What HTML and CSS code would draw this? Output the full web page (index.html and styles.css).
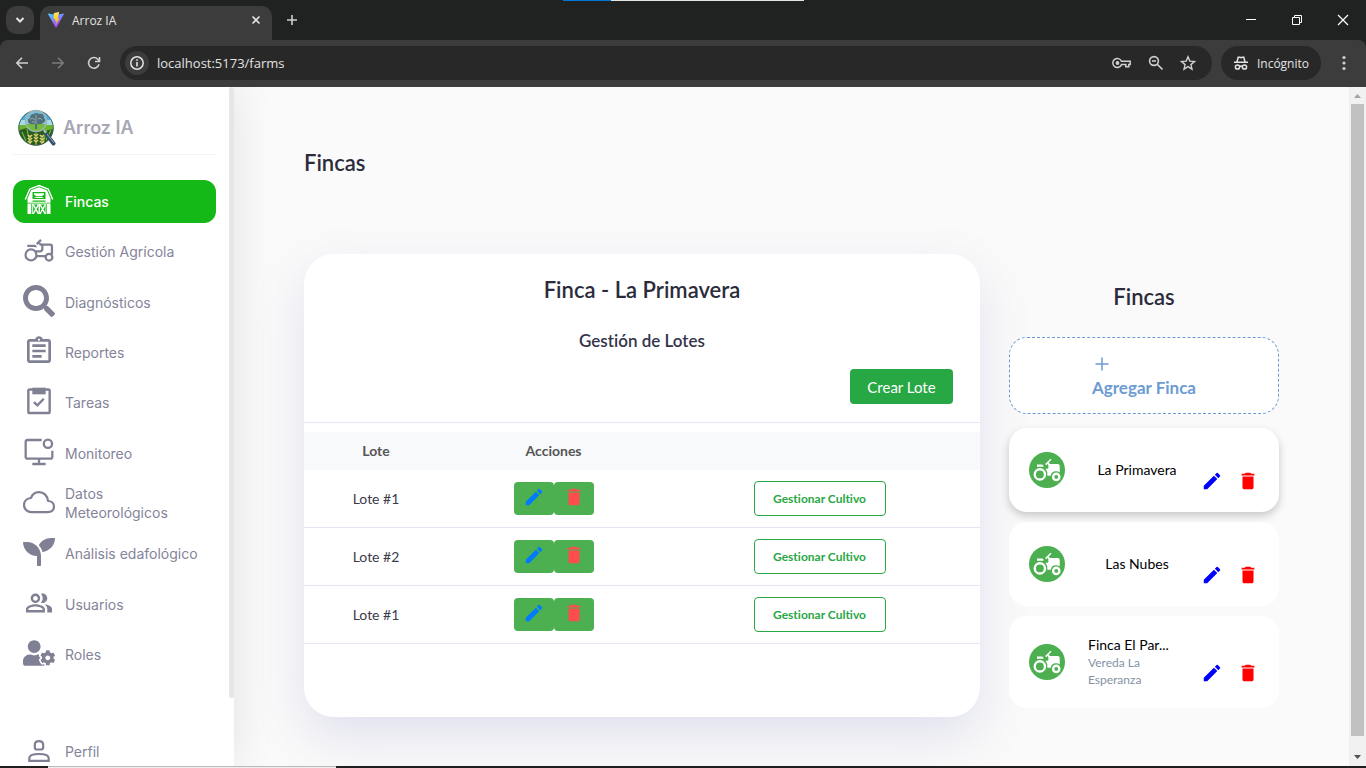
FILE: index.html
```html
<!DOCTYPE html>
<html lang="es">
<head>
<meta charset="utf-8">
<title>Arroz IA</title>
<link rel="stylesheet" href="styles.css">
</head>
<body>
<svg class="defs" aria-hidden="true">
  <symbol id="edit" viewBox="0 0 24 24"><path d="M3 17.250V21h3.750L17.810 9.940l-3.750-3.750L3 17.250zM20.710 7.040a.996.996 0 0 0 0-1.410l-2.340-2.340a.996.996 0 0 0-1.410 0l-1.830 1.830 3.750 3.750 1.830-1.830z"/></symbol>
  <symbol id="trash" viewBox="0 0 24 24"><path d="M6 19c0 1.100.9 2 2 2h8c1.100 0 2-.9 2-2V7H6v12zM19 4h-3.500l-1-1h-5l-1 1H5v2h14V4z"/></symbol>
  <symbol id="tractor" viewBox="0 0 24 24"><g fill="none" stroke="currentColor" stroke-width="1.700"><circle cx="6" cy="15.700" r="4.100"/><circle cx="19.500" cy="17.400" r="2.500"/><path d="M3.200 8.900H8.500q1 0 1 1M10.300 7.600l3.200-3.200M11.600 6.200l1.600 1.600M12.500 7.900h8q1.200 0 1.200 1.200v6.200M14.500 7.900v3.200q0 2-2 2H9.600M10.300 16.600h6.600"/></g></symbol>
  <symbol id="tractor-solid" viewBox="0 0 24 24"><path fill="currentColor" d="M4 7.500h4q1.300 0 1.300 1.800H4zM19.500 13q1.500 0 2.700.9V8.700q0-1.600-1.600-1.600h-6.300l-.9-1.100 2.200-2.200-.8-.8-4.300 4.200.9.900 1-1 .7.900V10q0 1-1 1h-1.300q1.900 2.300 1.500 5.500h2.700q.6-3.500 4.200-3.500z"/><g fill="none" stroke="currentColor" stroke-width="1.900"><circle cx="6.300" cy="15.500" r="4.100"/><circle cx="19.400" cy="17.500" r="2.500"/></g></symbol>
</svg>

<header class="browser">
  <div class="tabstrip">
    <button class="tab-search" aria-label="Buscar pestañas"><svg width="12" height="12" viewBox="0 0 12 12"><path d="M2.500 4l3.500 3.500L9.500 4" fill="none" stroke="#e3e3e3" stroke-width="2"/></svg></button>
    <div class="tab">
      <svg width="16" height="16" viewBox="0 0 32 32">
        <defs><linearGradient id="v1" x1="0" y1="0" x2=".6" y2="1"><stop stop-color="#41d1ff"/><stop offset="1" stop-color="#bd34fe"/></linearGradient><linearGradient id="v2" x1="0" y1="0" x2="0" y2="1"><stop stop-color="#ffea83"/><stop offset=".3" stop-color="#ffdd35"/><stop offset="1" stop-color="#ffa800"/></linearGradient></defs>
        <path fill="url(#v1)" d="M31.800 4.500L17 31q-.8 1.200-1.600 0L.2 4.500Q-.3 3 1.300 3.200L16 5.800l14.700-2.600q1.600-.1 1.100 1.300z"/>
        <path fill="url(#v2)" d="M22.500 0L11.800 2.100l-.7 12 3.800-.8-1 5 2.800-.8-1.800 8.500L23 12.500l-3.800.6z"/>
      </svg>
      <span class="tab-title">Arroz IA</span>
      <button class="icon-btn" aria-label="Cerrar pestaña"><svg width="10" height="10" viewBox="0 0 10 10"><path d="M1.500 1.500l7 7M8.500 1.500l-7 7" stroke="#e3e3e3" stroke-width="1.600"/></svg></button>
    </div>
    <button class="icon-btn new-tab" aria-label="Nueva pestaña"><svg width="12" height="12" viewBox="0 0 12 12"><path d="M6 1v10M1 6h10" stroke="#d0d0d0" stroke-width="1.600"/></svg></button>
    <div class="window-controls">
      <button class="icon-btn" aria-label="Minimizar"><svg width="12" height="12" viewBox="0 0 12 12"><path d="M1 5.500h10" stroke="#fff"/></svg></button>
      <button class="icon-btn" aria-label="Restaurar"><svg width="12" height="12" viewBox="0 0 12 12"><path d="M1.500 3.500h7v7h-7zM3.500 3.500v-2h7v7h-2" fill="none" stroke="#fff"/></svg></button>
      <button class="icon-btn" aria-label="Cerrar"><svg width="12" height="12" viewBox="0 0 12 12"><path d="M1 1l10 10M11 1L1 11" stroke="#fff" stroke-width="1.200"/></svg></button>
    </div>
  </div>
  <div class="toolbar">
    <button class="icon-btn" aria-label="Atrás"><svg width="16" height="16" viewBox="0 0 16 16"><path d="M14 8H3M8 2.800L2.800 8 8 13.200" fill="none" stroke="#d0d0d0" stroke-width="1.600"/></svg></button>
    <button class="icon-btn" aria-label="Adelante"><svg width="16" height="16" viewBox="0 0 16 16"><path d="M2 8h11M8 2.800L13.200 8 8 13.200" fill="none" stroke="#7b7b7b" stroke-width="1.600"/></svg></button>
    <button class="icon-btn" aria-label="Recargar"><svg width="16" height="16" viewBox="0 0 16 16"><path d="M13 9.200A5.300 5.300 0 1 1 11.800 4.300L13.500 6M13.500 2v4.500H9" fill="none" stroke="#d0d0d0" stroke-width="1.600"/></svg></button>
    <div class="omnibox">
      <button class="site-info" aria-label="Información del sitio"><svg width="16" height="16" viewBox="0 0 16 16"><circle cx="8" cy="8" r="6.200" fill="none" stroke="#e3e3e3" stroke-width="1.500"/><path d="M8 7v4.500M8 4.200v1.600" stroke="#e3e3e3" stroke-width="1.600"/></svg></button>
      <input class="url" type="text" value="localhost:5173/farms" aria-label="Dirección">
      <button class="icon-btn" aria-label="Contraseñas"><svg width="20" height="16" viewBox="0 0 20 16"><g fill="none" stroke="#d0d0d0" stroke-width="1.500"><path d="M9.500 6.300H18.200v3.200h-1.400v2.200h-3V9.600H9.500A4.500 4.500 0 1 1 9.500 6.300z"/></g><circle cx="5.500" cy="8" r="1.900" fill="#d0d0d0"/></svg></button>
      <button class="icon-btn" aria-label="Zoom"><svg width="16" height="16" viewBox="0 0 16 16"><path d="M9.500 9.500l5 5M4 6h4" stroke="#d0d0d0" stroke-width="1.700"/><circle cx="6" cy="6" r="4.400" fill="none" stroke="#d0d0d0" stroke-width="1.600"/></svg></button>
      <button class="icon-btn" aria-label="Favoritos"><svg width="16" height="16" viewBox="0 0 16 16"><path d="M8 1.800l1.800 4.300 4.700.4-3.600 3.100 1.100 4.600L8 11.700l-4 2.500 1.100-4.600L1.500 6.500l4.700-.4z" fill="none" stroke="#d0d0d0" stroke-width="1.400"/></svg></button>
    </div>
    <button class="incognito"><svg width="16" height="16" viewBox="0 0 16 16"><path d="M1 7.300h14M4 7l1.200-4.800h1.600l1.200.5 1.200-.5h1.600L12 7M6.600 11.500q1.400-.9 2.800 0" fill="none" stroke="#e3e3e3" stroke-width="1.500"/><circle cx="4.500" cy="12" r="2.100" fill="none" stroke="#e3e3e3" stroke-width="1.500"/><circle cx="11.500" cy="12" r="2.100" fill="none" stroke="#e3e3e3" stroke-width="1.500"/></svg>Incógnito</button>
    <button class="icon-btn menu" aria-label="Menú"><svg width="4" height="16" viewBox="0 0 4 16"><g fill="#d0d0d0"><circle cx="2" cy="2.500" r="1.600"/><circle cx="2" cy="8" r="1.600"/><circle cx="2" cy="13.500" r="1.600"/></g></svg></button>
  </div>
</header>

<div class="page">
  <aside class="sidebar">
    <div class="sidebar-body">
      <div class="brand">
        <svg width="38" height="38" viewBox="0 0 38 38">
          <defs><clipPath id="disc"><circle cx="18" cy="19" r="17.300"/></clipPath></defs>
          <g clip-path="url(#disc)">
            <path fill="#45aee0" d="M0 0h38v18H0z"/><path fill="#a4dbe6" d="M0 11h38v6H0z"/>
            <path fill="#6cb52c" d="M0 16h38v22H0z"/><path fill="#285c20" d="M0 22q9-5 18-2t20-1v19H0z"/>
            <path d="M4 23l4 9M9 20l3 15M29 20l-4 14M33 21l-5 10M2 28l6 7" stroke="#73b83b" stroke-width="1.200"/>
            <path d="M12 26v10M18 24v13M24 26v10" stroke="#d9c468" stroke-width="1"/>
            <path d="M9.800 26l2.200 2 2.200-2M9.800 29l2.200 2 2.200-2M9.800 32l2.200 2 2.200-2M15.800 25l2.200 2 2.200-2M15.800 28l2.200 2 2.200-2M15.800 31l2.200 2 2.200-2M21.800 26l2.200 2 2.200-2M21.800 29l2.200 2 2.200-2M21.800 32l2.200 2 2.200-2" stroke="#e2cf70" stroke-width="1.200" fill="none"/>
          </g>
          <circle cx="18" cy="19" r="17.300" fill="none" stroke="#3f655f"/>
          <circle cx="18" cy="12" r="10.500" fill="#8ac4d6" fill-opacity=".75" stroke="#9db6bc" stroke-width="1.500"/>
          <path fill="#75bb3c" d="M8.500 15h19q-3 7-9.500 7t-9.500-7z"/>
          <path fill="#526f7c" d="M17 20v-5q-6 1-7-2-1-3 2-4 0-4 4-4 2-2 5 0 5-1 5 4 3 3-1 5-2 2-6 1v5z"/>
          <path d="M12 10q3-2 5 1M18 6v9M20 10q3-2 4 1M14 13h3" stroke="#a4b8bc" fill="none" stroke-width=".8"/>
          <path d="M26 21l3 5" stroke="#b7c8cd" stroke-width="2"/><path d="M28.500 25.500l7 9" stroke="#31506b" stroke-width="4" stroke-linecap="round"/><path d="M29 25l7 9" stroke="#91abc0"/>
        </svg>
        <span>Arroz IA</span>
      </div>
      <nav class="nav">
        <a class="nav-item active" href="#"><svg class="nav-icon" viewBox="0 0 32 32"><path d="M2.300 15.500L6.800 5 16 1.600 25.200 5l4.500 10.500" fill="none" stroke="#fff" stroke-width="1.400"/><path fill="#fff" fill-rule="evenodd" d="M4.500 14.500L8 6.300l8-3 8 3 3.500 8.200V30h-23zM9.500 8v7h13V8zM9.500 16.500v1.200h13v-1.200zM8.300 20v10h.9V20zM22.800 20v10h.9V20zM4.500 18.800v.8h23v-.8z"/><path fill="#fff" d="M11 9.200h10v1.600l-2 1.200h-6l-2-1.200zM11 14l2.500-1.300h5L21 14z"/><path fill="#14b817" d="M10.200 20.500h5.300V30h-5.300zM17 20.500h5.300V30H17z"/><path d="M10.200 20.500l5.300 9.500M15.500 20.500l-5.300 9.500M17 20.500l5.300 9.500M22.300 20.500L17 30" stroke="#fff" stroke-width="1.500"/></svg><span>Fincas</span></a>
        <a class="nav-item" href="#"><svg class="nav-icon"><use href="#tractor"/></svg><span>Gestión Agrícola</span></a>
        <a class="nav-item" href="#"><svg class="nav-icon" viewBox="0 0 512 512"><path d="M505 442.700L405.300 343c-4.500-4.500-10.600-7-17-7H372c27.600-35.300 44-79.700 44-128C416 93.100 322.900 0 208 0S0 93.100 0 208s93.100 208 208 208c48.300 0 92.700-16.400 128-44v16.300c0 6.400 2.500 12.500 7 17l99.700 99.700c9.400 9.400 24.600 9.400 33.900 0l28.300-28.300c9.400-9.400 9.400-24.600.1-34zM208 336c-70.700 0-128-57.200-128-128 0-70.700 57.200-128 128-128 70.700 0 128 57.200 128 128 0 70.700-57.200 128-128 128z"/></svg><span>Diagnósticos</span></a>
        <a class="nav-item" href="#"><svg class="nav-icon" viewBox="0 0 24 24"><path d="M7 15h7v2H7zm0-4h10v2H7zm0-4h10v2H7zm12-4h-4.180C14.400 1.840 13.300 1 12 1c-1.300 0-2.400.84-2.820 2H5c-1.100 0-2 .9-2 2v14c0 1.100.9 2 2 2h14c1.100 0 2-.9 2-2V5c0-1.100-.9-2-2-2zm-7-.25c.41 0 .75.34.75.75s-.34.75-.75.75-.75-.34-.75-.75.34-.75.75-.75zM19 19H5V5h14v14z"/></svg><span>Reportes</span></a>
        <a class="nav-item" href="#"><svg class="nav-icon" viewBox="0 0 24 24"><g fill="none" stroke="currentColor" stroke-width="1.800"><rect x="4" y="3.400" width="16" height="17.600" rx="1"/><path d="M8.200 12.800l2.600 2.500 4.800-5"/></g><path d="M7 2h10v5H7z"/></svg><span>Tareas</span></a>
        <a class="nav-item" href="#"><svg class="nav-icon" viewBox="0 0 24 24"><g fill="none" stroke="currentColor" stroke-width="1.700"><path d="M14 3H3.500Q2 3 2 4.500v11Q2 17 3.500 17h17q1.500 0 1.500-1.500V11M12 17v4M7 21h10"/><circle cx="18.700" cy="5.800" r="3.100"/></g></svg><span>Monitoreo</span></a>
        <a class="nav-item" href="#"><svg class="nav-icon" viewBox="0 0 512 512"><path fill="none" stroke="currentColor" stroke-width="36" stroke-linejoin="round" d="M400 240c-8.890-89.540-71-144-144-144-69 0-113.440 48.200-128 96-60 6-112 43.590-112 112 0 66 54 112 120 112h260c55 0 100-27.440 100-88 0-59.820-53-85.760-96-88z"/></svg><span>Datos Meteorológicos</span></a>
        <a class="nav-item" href="#"><svg class="nav-icon" viewBox="0 0 512 512"><path d="M64 96H0c0 123.700 100.300 224 224 224v144c0 8.800 7.200 16 16 16h32c8.800 0 16-7.200 16-16V320C288 196.300 187.700 96 64 96zm384-64c-84.200 0-157.400 46.500-195.700 115.200 27.700 30.200 48.200 66.900 59 107.600C424 243.100 512 147.900 512 32h-64z"/></svg><span>Análisis edafológico</span></a>
        <a class="nav-item" href="#"><svg class="nav-icon" viewBox="-1.500 -1.500 27 27"><path d="M16.670 13.130C18.040 14.060 19 15.320 19 17v3h4v-3c0-2.180-3.570-3.470-6.330-3.870zM15 12c2.210 0 4-1.790 4-4s-1.790-4-4-4c-.47 0-.91.1-1.330.24a5.980 5.980 0 0 1 0 7.520c.42.14.86.24 1.330.24zM9 12c2.210 0 4-1.790 4-4s-1.790-4-4-4-4 1.790-4 4 1.790 4 4 4zm0-6c1.100 0 2 .9 2 2s-.9 2-2 2-2-.9-2-2 .9-2 2-2zM9 13c-2.670 0-8 1.340-8 4v3h16v-3c0-2.660-5.330-4-8-4zm6 5H3v-.99C3.200 16.290 6.300 15 9 15s5.800 1.290 6 2v1z"/></svg><span>Usuarios</span></a>
        <a class="nav-item" href="#"><svg class="nav-icon" viewBox="0 0 640 512"><path d="M610.500 373.300c2.600-14.100 2.600-28.500 0-42.600l25.800-14.900c3-1.700 4.300-5.200 3.300-8.500-6.700-21.600-18.200-41.200-33.200-57.400-2.300-2.500-6-3.100-9-1.400l-25.800 14.900c-10.900-9.300-23.400-16.500-36.900-21.300v-29.800c0-3.400-2.400-6.400-5.700-7.100-22.300-5-45-4.800-66.200 0-3.300.7-5.700 3.700-5.700 7.100v29.800c-13.500 4.800-26 12-36.900 21.300l-25.800-14.900c-2.900-1.700-6.700-1.100-9 1.400-15 16.200-26.500 35.800-33.200 57.400-1 3.300.4 6.800 3.300 8.500l25.800 14.900c-2.600 14.100-2.600 28.500 0 42.600l-25.800 14.900c-3 1.700-4.300 5.200-3.300 8.500 6.700 21.600 18.200 41.100 33.200 57.400 2.300 2.500 6 3.100 9 1.400l25.800-14.900c10.900 9.300 23.400 16.500 36.900 21.300v29.800c0 3.400 2.400 6.400 5.700 7.100 22.300 5 45 4.800 66.200 0 3.300-.7 5.700-3.700 5.700-7.100v-29.800c13.500-4.800 26-12 36.900-21.300l25.800 14.900c2.900 1.700 6.700 1.100 9-1.400 15-16.200 26.500-35.800 33.200-57.400 1-3.300-.4-6.800-3.300-8.500l-25.800-14.900zM496 400.500c-26.800 0-48.500-21.800-48.500-48.500s21.800-48.500 48.500-48.500 48.500 21.800 48.500 48.500-21.700 48.500-48.500 48.500zM224 256c70.700 0 128-57.300 128-128S294.700 0 224 0 96 57.300 96 128s57.300 128 128 128zm201.200 226.500c-2.300-1.200-4.600-2.600-6.800-3.900l-7.900 4.600c-6 3.400-12.800 5.300-19.600 5.300-10.900 0-21.400-4.600-28.900-12.600-18.300-19.800-32.300-43.900-40.200-69.600-5.500-17.700 1.900-36.400 17.900-45.700l7.900-4.600c-.1-2.600-.1-5.200 0-7.800l-7.900-4.600c-16-9.200-23.400-28-17.900-45.700.9-2.900 2.200-5.800 3.200-8.700-3.800-.3-7.500-1.200-11.400-1.200h-16.700c-22.200 10.200-46.900 16-72.900 16s-50.600-5.800-72.900-16h-16.700C60.200 288 0 348.200 0 422.400V464c0 26.500 21.500 48 48 48h352c10.100 0 19.500-3.200 27.200-8.500-1.200-3.800-2-7.700-2-11.800v-9.200z"/></svg><span>Roles</span></a>
      </nav>
      <a class="nav-item profile" href="#"><svg class="nav-icon" viewBox="0 0 32 32"><g fill="none" stroke="currentColor" stroke-width="2.200"><path d="M11.800 11q0-3.800 4.200-3.800t4.200 3.800v2.200q0 2.300-2.300 2.300h-3.800q-2.300 0-2.300-2.300zM6.300 26.800v-2.600q0-4.200 9.700-4.200t9.700 4.200v2.600z"/></g></svg><span>Perfil</span></a>
    </div>
    <div class="sidebar-scroll"></div>
  </aside>

  <main class="main">
    <h1 class="title">Fincas</h1>
    <div class="content">
      <section class="card">
        <div class="card-head">
          <h2 class="title">Finca - La Primavera</h2>
          <h3 class="subtitle">Gestión de Lotes</h3>
          <button class="create">Crear Lote</button>
        </div>
        <table class="lots">
          <thead><tr><th class="col-lot">Lote</th><th class="col-actions">Acciones</th><th></th></tr></thead>
          <tbody>
            <tr><td>Lote #1</td><td><div class="row-actions"><button class="act edit" aria-label="Editar"><svg class="ico"><use href="#edit"/></svg></button><button class="act del" aria-label="Eliminar"><svg class="ico"><use href="#trash"/></svg></button></div></td><td><button class="manage">Gestionar Cultivo</button></td></tr>
            <tr><td>Lote #2</td><td><div class="row-actions"><button class="act edit" aria-label="Editar"><svg class="ico"><use href="#edit"/></svg></button><button class="act del" aria-label="Eliminar"><svg class="ico"><use href="#trash"/></svg></button></div></td><td><button class="manage">Gestionar Cultivo</button></td></tr>
            <tr><td>Lote #1</td><td><div class="row-actions"><button class="act edit" aria-label="Editar"><svg class="ico"><use href="#edit"/></svg></button><button class="act del" aria-label="Eliminar"><svg class="ico"><use href="#trash"/></svg></button></div></td><td><button class="manage">Gestionar Cultivo</button></td></tr>
          </tbody>
        </table>
      </section>

      <section class="farms">
        <h2 class="title">Fincas</h2>
        <button class="add"><span class="add-label"><svg width="20" height="20" viewBox="0 0 20 20"><path d="M10 3.500v13M3.500 10h13" stroke="currentColor" stroke-width="1.500"/></svg>Agregar Finca</span></button>
        <div class="farm-list">
          <article class="farm selected"><span class="avatar"><svg width="30" height="30"><use href="#tractor-solid"/></svg></span><div class="farm-text"><div class="farm-name">La Primavera</div></div><div class="farm-actions"><button class="icon-btn fe" aria-label="Editar"><svg class="ico"><use href="#edit"/></svg></button><button class="icon-btn fd" aria-label="Eliminar"><svg class="ico"><use href="#trash"/></svg></button></div></article>
          <article class="farm"><span class="avatar"><svg width="30" height="30"><use href="#tractor-solid"/></svg></span><div class="farm-text"><div class="farm-name">Las Nubes</div></div><div class="farm-actions"><button class="icon-btn fe" aria-label="Editar"><svg class="ico"><use href="#edit"/></svg></button><button class="icon-btn fd" aria-label="Eliminar"><svg class="ico"><use href="#trash"/></svg></button></div></article>
          <article class="farm"><span class="avatar"><svg width="30" height="30"><use href="#tractor-solid"/></svg></span><div class="farm-text detailed"><div class="farm-name">Finca El Par...</div><div class="farm-place">Vereda La Esperanza</div></div><div class="farm-actions"><button class="icon-btn fe" aria-label="Editar"><svg class="ico"><use href="#edit"/></svg></button><button class="icon-btn fd" aria-label="Eliminar"><svg class="ico"><use href="#trash"/></svg></button></div></article>
        </div>
      </section>
    </div>
  </main>

  <div class="scrollbar">
    <svg width="17" height="17" viewBox="0 0 17 17"><path fill="#a3a3a3" d="M5 11l3.500-4 3.500 4z"/></svg>
    <div class="thumb"></div>
    <svg width="17" height="17" viewBox="0 0 17 17"><path fill="#505050" d="M5 6l3.500 4L12 6z"/></svg>
  </div>
</div>
<div class="taskbar"><span class="task-window"></span></div>
</body>
</html>
```
FILE: styles.css
```css
* { box-sizing: border-box; }
body {
  margin: 0;
  height: 100vh;
  display: flex;
  flex-direction: column;
  overflow: hidden;
  font-family: Lato, sans-serif;
  font-variant-ligatures: no-common-ligatures;
  background: #fafafa;
}
button { font: inherit; font-variant-ligatures: inherit; cursor: pointer; }
h1, h2, h3 { margin: 0; }
svg { display: block; flex: none; }
.defs { position: absolute; width: 0; height: 0; }
.icon-btn { display: flex; align-items: center; justify-content: center; padding: 0; border: 0; background: none; }

/* Browser frame */
.browser { flex: none; background: #1f2221; color: #e3e3e3; font-family: "Open Sans", sans-serif; font-size: 12px; position: relative; }
.browser::before {
  content: "";
  position: absolute;
  top: 0;
  left: 50%;
  width: 241px;
  height: 1px;
  margin-left: -120px;
  background: linear-gradient(90deg, #0078d7 20%, #dfe6e2 20%);
}
.tabstrip { display: flex; align-items: center; height: 40px; padding-left: 6px; }
.tab-search { width: 28px; height: 28px; display: grid; place-items: center; border: 0; border-radius: 10px; background: #3c3c3c; padding: 0; }
.tab { align-self: flex-end; display: flex; align-items: center; width: 232px; height: 34px; margin-left: 6px; padding: 0 11px 6px 8px; border-radius: 10px 10px 0 0; background: #3c3c3c; }
.tab-title { flex: 1; margin-left: 8px; font-size: 12px; }
.new-tab { margin-left: 14px; }
.window-controls { display: flex; align-self: stretch; margin-left: auto; }
.window-controls .icon-btn { width: 46px; }
.toolbar { display: flex; align-items: center; height: 47px; padding: 0 0 1px 14px; border-radius: 8px 8px 0 0; background: #3c3c3c; }
.toolbar > .icon-btn { width: 16px; margin-right: 20px; }
.omnibox { flex: 1; display: flex; align-items: center; gap: 16px; height: 34px; margin: 0 9px 0 -2px; padding: 0 16px 0 5px; border-radius: 17px; background: #282828; }
.omnibox .icon-btn { min-width: 16px; }
.site-info { width: 24px; height: 24px; padding: 0; display: grid; place-items: center; border: 0; border-radius: 50%; background: #3c3c3c; }
.url { flex: 1; min-width: 0; margin-left: -8px; padding: 0; border: 0; outline: 0; background: none; color: #e3e3e3; font: 13px "Open Sans", sans-serif; }
.incognito { display: flex; align-items: center; gap: 8px; height: 34px; padding: 0 12px; border: 0; border-radius: 17px; background: #282828; color: #e3e3e3; }
.toolbar > .menu { width: 16px; margin: 0 14px 0 15px; }

/* Page */
.page { flex: 1; min-height: 0; display: flex; background: #fafafa; }
.sidebar { flex: none; display: flex; width: 234px; background: #fff; box-shadow: 0 0 40px rgba(0, 0, 0, .1); clip-path: inset(0 -40px 0 0); }
.sidebar-body { flex: 1; padding: 17px 13px 0; overflow: hidden; }
.sidebar-scroll { width: 5px; height: 90%; border-radius: 3px; background: #e6e6e6; }
.brand { display: flex; align-items: center; gap: 7px; height: 51px; padding: 0 0 3px 5px; border-bottom: 1px solid #f3f3f3; color: #a7a7b3; font: 600 18px Inter, sans-serif; }
.nav { display: flex; flex-direction: column; justify-content: space-between; height: 496px; margin-top: 25px; }
.nav-item { display: flex; align-items: center; gap: 10px; height: 43px; padding: 0 10px; border-radius: 12px; color: #84849a; font: 14px/19px Inter, sans-serif; text-decoration: none; }
.nav-icon { width: 32px; height: 32px; margin-top: -3px; fill: currentColor; color: #808094; }
.active { background: #14b817; color: #fff; font-weight: 500; }
.profile { margin-top: 54px; }

.main { flex: 1; min-width: 0; padding: 62px 70px 0; overflow: hidden; }
.title { color: #2b2b3c; font-size: 22px; font-weight: 600; line-height: 28px; }
.content { display: grid; grid-template-columns: 1fr 270px; gap: 29px; align-items: start; margin-top: 77px; }
.card { padding-bottom: 73px; border-radius: 30px; background: #fff; box-shadow: 0 20px 50px rgba(112, 112, 190, .18); text-align: center; }
.card-head { padding: 22px 27px 18px; border-bottom: 1px solid #e6e6f5; }
.subtitle { margin: 25px 0 16px; color: #33334a; font-size: 17px; font-weight: 600; line-height: 24px; }
.create { display: block; width: 103px; height: 35px; margin-left: auto; border: 0; border-radius: 4px; background: #28a745; color: #fff; font-size: 15px; padding: 0; }
.lots { width: 100%; margin-top: 9px; border-collapse: separate; border-spacing: 0; table-layout: fixed; color: #3b3b4a; font-size: 14px; }
.lots th { height: 38px; padding: 0 0 1px; background: #f8f9fb; color: #555; font-weight: 700; }
.lots td { height: 58px; padding: 0; border-bottom: 1px solid #e6e6f2; }
.lots .col-lot { width: 144px; }
.lots .col-actions { width: 211px; }
.row-actions { display: flex; justify-content: center; }
.act { display: grid; place-items: center; width: 40px; height: 33px; padding: 0 0 3px; border: 0; border-radius: 4px; background: #4caf50; }
.ico { width: 22px; height: 22px; fill: currentColor; }
.edit { color: #007bff; }
.del { color: #ff4d4d; }
.manage { width: 132px; height: 35px; padding: 0; border: 1px solid #28a745; border-radius: 4px; background: #fff; color: #28a745; font-size: 12px; font-weight: 700; }

.farms { padding-top: 29px; text-align: center; }
.add { display: flex; justify-content: center; width: 100%; height: 77px; margin: 26px 0 14px; padding: 16px 0 0; border: 1px dashed #6c9bd2; border-radius: 18px; background: #fff; color: #6c9bd2; font-size: 17px; font-weight: 700; line-height: 28px; }
.add-label { text-align: left; }
.farm-list { display: grid; gap: 10px; }
.farm { display: flex; align-items: center; min-height: 83px; padding: 20px; border-radius: 18px; background: #fff; }
.selected { box-shadow: 0 4px 8px rgba(0, 0, 0, .2); }
.avatar { display: grid; place-items: center; width: 36px; height: 36px; border-radius: 50%; background: #4caf50; color: #fff; }
.farm-text { width: 98px; margin-left: 23px; text-align: center; }
.detailed { text-align: left; }
.farm-name { color: #000; font-size: 14px; line-height: 18px; }
.farm-place { color: #8492a6; font-size: 12px; line-height: 17px; }
.farm-actions { display: flex; gap: 14px; margin-left: 15px; padding-top: 22px; }
.fe { color: #00f; }
.fd { color: #f00; }

.scrollbar { flex: none; display: flex; flex-direction: column; width: 17px; background: #f1f1f1; }
.thumb { height: 632px; min-height: 0; margin: 0 2px auto; background: #c1c1c1; }
.taskbar { flex: none; height: 2px; padding-left: 48px; background: #1f1f1f; }
.task-window { display: block; width: 288px; height: 2px; border-top: 1px solid #bbb; background: #eee; }
```
